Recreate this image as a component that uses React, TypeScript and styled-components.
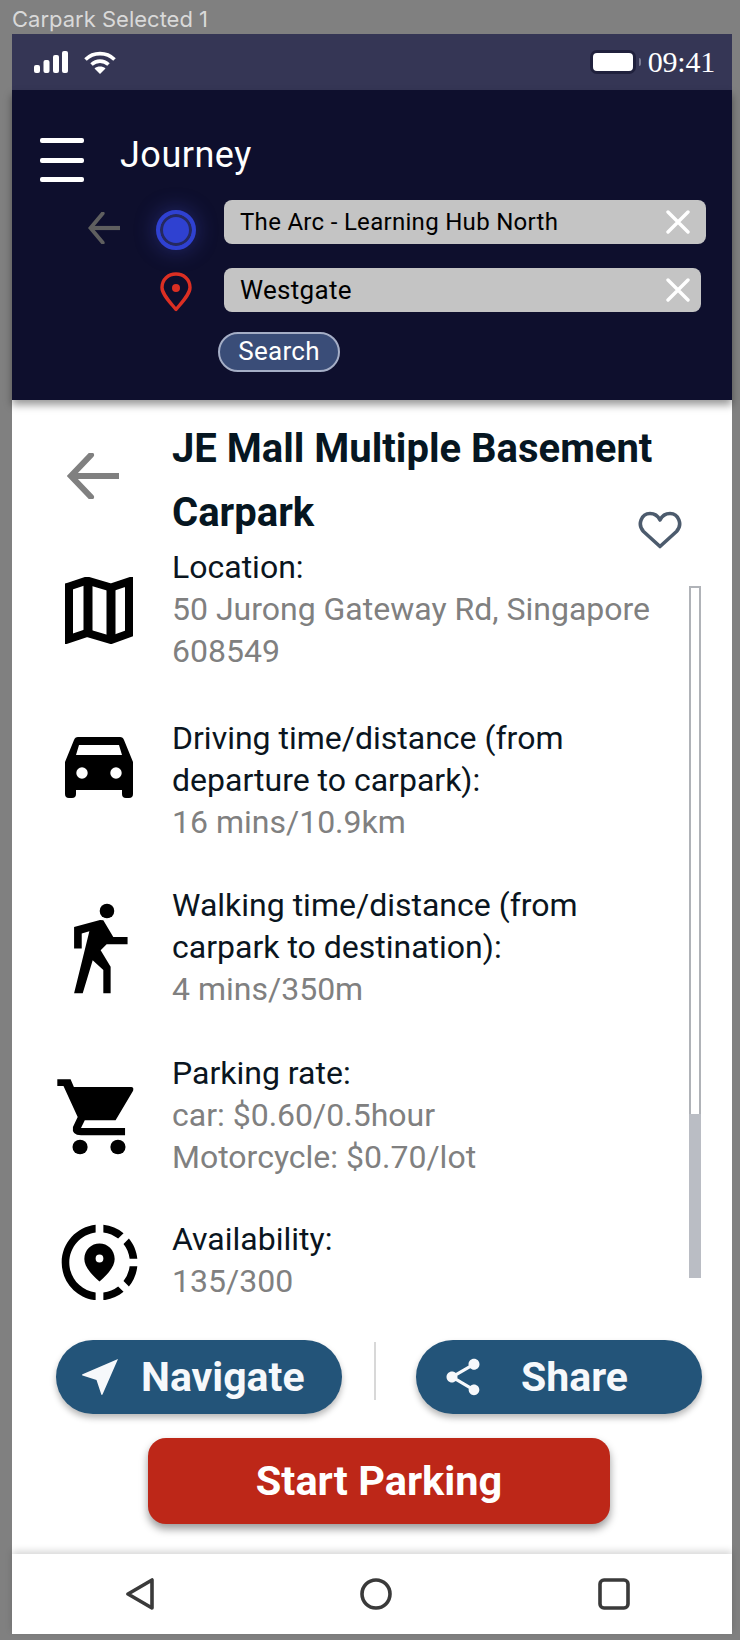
import * as React from "react";
import styled, { createGlobalStyle } from "styled-components";
import { MdOutlineShareLocation, MdShare } from "react-icons/md";

const GlobalStyle = createGlobalStyle`
  html, body {
    margin: 0;
    padding: 0;
    background: #808080;
  }
  * {
    box-sizing: border-box;
  }
`;

const Page = styled.div`
  width: 740px;
  height: 1640px;
  overflow: hidden;
  background: #808080;
  font-family: Roboto, "Liberation Sans", sans-serif;
`;

const Caption = styled.div`
  height: 34px;
  padding: 6px 0 0 12px;
  font-family: Inter, Roboto, sans-serif;
  font-size: 22px;
  line-height: 26px;
  color: #d9d9d9;
`;

const Frame = styled.div`
  width: 720px;
  height: 1600px;
  margin-left: 12px;
  background: #fff;
  display: flex;
  flex-direction: column;
`;

const StatusBar = styled.div`
  height: 56px;
  flex: none;
  background: #353655;
  display: flex;
  align-items: center;
  padding: 0 17px 0 22px;
  color: #fff;
`;

const StatusLeft = styled.div`
  display: flex;
  align-items: center;
  gap: 16px;
  flex: 1;
`;

const Battery = styled.div`
  width: 46px;
  height: 24px;
  border: 3px solid #20213d;
  border-radius: 7px;
  background: #fff;
  margin-right: 12px;
  position: relative;

  &::after {
    content: "";
    position: absolute;
    right: -8px;
    top: 5px;
    width: 2px;
    height: 8px;
    border-radius: 0 2px 2px 0;
    background: #7a7b93;
  }
`;

const Clock = styled.div`
  font-family: "Liberation Serif", serif;
  font-size: 30px;
  line-height: 32px;
  letter-spacing: -0.2px;
`;

const Header = styled.header`
  height: 310px;
  flex: none;
  background: #0e0f2d;
  padding-top: 48px;
  box-shadow: 0 5px 8px rgba(0, 0, 0, 0.4);
  position: relative;
  z-index: 2;
`;

const TitleBar = styled.div`
  height: 44px;
  display: flex;
  align-items: center;
  padding-left: 28px;
  gap: 36px;
`;

const Burger = styled.div`
  width: 44px;
  height: 44px;
  display: flex;
  flex-direction: column;
  justify-content: space-between;

  span {
    display: block;
    height: 5px;
    border-radius: 2px;
    background: #fff;
  }
`;

const HeaderTitle = styled.div`
  font-size: 36px;
  line-height: 40px;
  letter-spacing: 0.5px;
  margin-bottom: 10px;
  color: #fff;
`;

const SearchRows = styled.div`
  margin-top: 18px;
  padding-left: 76px;
  display: flex;
  flex-direction: column;
  gap: 24px;
`;

const SearchRow = styled.div`
  height: 44px;
  display: grid;
  grid-template-columns: 32px 40px auto;
  align-items: start;
`;

const BackSlot = styled.div`
  margin-top: 12px;
  width: 32px;
  height: 32px;
  color: #5f5f5f;
`;

const Marker = styled.div<{ $top: number; $left: number }>`
  margin: ${(p) => p.$top}px 0 0 ${(p) => p.$left}px;
  width: 40px;
  height: 40px;
`;

const Dot = styled.div`
  width: 40px;
  height: 40px;
  border-radius: 50%;
  background: #2f41d1;
  border: 4px solid #2f41d1;
  box-shadow: inset 0 0 0 3px #25295f, 0 0 22px rgba(70, 80, 210, 0.4);
`;

const Field = styled.div<{ $w: number; $size: number; $pad: number }>`
  width: ${(p) => p.$w}px;
  height: 44px;
  margin-left: 64px;
  padding: 0 ${(p) => p.$pad}px 0 16px;
  border-radius: 8px;
  background: #c4c4c4;
  display: flex;
  align-items: center;
  justify-content: space-between;
  font-size: ${(p) => p.$size}px;
  letter-spacing: 0.3px;
  color: #000;
`;

const SearchPill = styled.div`
  width: 122px;
  height: 40px;
  margin: 20px 0 0 206px;
  padding-bottom: 2px;
  border: 2px solid #a5aec6;
  border-radius: 20px;
  background: #3a4d78;
  display: flex;
  align-items: center;
  justify-content: center;
  font-size: 26px;
  letter-spacing: 0.3px;
  color: #fff;
`;

const Main = styled.main`
  flex: 1;
  min-height: 0;
  display: flex;
  flex-direction: column;
`;

const TitleRow = styled.div`
  flex: none;
  display: flex;
  padding: 17px 0 0 55px;
  height: 146px;
  position: relative;
`;

const BackLarge = styled.div`
  width: 52px;
  height: 46px;
  margin-top: 36px;
  color: #808080;
  flex: none;
`;

const PlaceTitle = styled.h1`
  margin: 0 0 0 53px;
  width: 500px;
  font-size: 40px;
  line-height: 64px;
  font-weight: 700;
  color: #061621;
`;

const HeartSlot = styled.div`
  position: absolute;
  left: 626px;
  top: 111px;
  width: 44px;
  height: 38px;
  color: #4c5b6d;
`;

const List = styled.div`
  position: relative;
  flex: none;
  height: 754px;
  overflow: hidden;
  padding-left: 40px;
  display: flex;
  flex-direction: column;
`;

const Row = styled.div<{ $top: number }>`
  margin-top: ${(p) => p.$top}px;
  display: grid;
  grid-template-columns: 94px 1fr;
  column-gap: 27px;
  align-items: center;
`;

const IconSlot = styled.div<{ $shift?: number }>`
  display: flex;
  justify-content: center;
  align-items: center;
  height: 84px;
  color: #000;
  transform: translateY(${(p) => p.$shift ?? 0}px);

  svg {
    flex: none;
  }
`;

const RowText = styled.div`
  font-size: 32px;
  line-height: 42px;
  width: 500px;
  margin-left: -1px;
`;

const Label = styled.div`
  color: #0a1520;
`;

const Value = styled.div`
  color: #808080;
`;

const Track = styled.div`
  position: absolute;
  left: 677px;
  top: 40px;
  width: 12px;
  height: 692px;
  border: 2px solid #b0b3b8;
  border-bottom: none;
  display: flex;
  flex-direction: column;
  justify-content: flex-end;
`;

const Thumb = styled.div`
  height: 164px;
  margin: 0 -2px;
  background: #babdc4;
`;

const Actions = styled.div`
  flex: none;
  margin-top: 40px;
  padding-left: 44px;
  display: grid;
  grid-template-columns: 286px 74px 286px;
`;

const ActionButton = styled.div<{ $gap: number; $pad: number }>`
  height: 74px;
  border-radius: 37px;
  background: #235479;
  box-shadow: 0 4px 6px rgba(0, 0, 0, 0.28);
  display: flex;
  align-items: center;
  gap: ${(p) => p.$gap}px;
  padding-left: ${(p) => p.$pad}px;
  font-size: 41px;
  font-weight: 700;
  color: #f6f8fb;
`;

const Divider = styled.div`
  width: 2px;
  height: 58px;
  margin: 2px 0 0 32px;
  background: #d8d8d8;
`;

const StartButton = styled.div`
  flex: none;
  width: 462px;
  height: 86px;
  margin: 24px 0 0 136px;
  padding-bottom: 2px;
  border-radius: 18px;
  background: #bd2718;
  box-shadow: 0 5px 8px rgba(0, 0, 0, 0.4);
  display: flex;
  align-items: center;
  justify-content: center;
  font-size: 41.5px;
  font-weight: 700;
  color: #fff;
`;

const Spacer = styled.div`
  flex: 1;
`;

const NavBar = styled.nav`
  flex: none;
  height: 80px;
  background: #fff;
  box-shadow: 0 -3px 7px rgba(0, 0, 0, 0.16);
  display: flex;
  align-items: center;
  justify-content: space-between;
  padding: 0 102px 0 114px;
  position: relative;
  color: #3a3a3a;
`;

const Signal = () => (
  <svg width="34" height="22" viewBox="0 0 34 22" fill="#fff">
    <rect x="0" y="14" width="6" height="8" rx="2" />
    <rect x="9.5" y="9" width="6" height="13" rx="2" />
    <rect x="19" y="4" width="6" height="18" rx="2" />
    <rect x="28" y="0" width="6" height="22" rx="2" />
  </svg>
);

const Wifi = () => (
  <svg width="32" height="23" viewBox="0 0 32 23" fill="none" stroke="#fff" strokeWidth="3.6">
    <path d="M1.5 8.5C9.5 .6 22.5 .6 30.5 8.5" />
    <path d="M7.5 13.5C12.5 9 19.5 9 24.5 13.5" />
    <path d="M16 23l-5.5-5.5c3-2.6 8-2.6 11 0z" fill="#fff" stroke="none" />
  </svg>
);

const Arrow = () => (
  <svg width="100%" height="100%" viewBox="0 0 52 46" fill="none" stroke="currentColor" strokeWidth="6" preserveAspectRatio="none">
    <path d="M52 23H5" />
    <path d="M24 2L4 23l20 21" strokeLinecap="round" />
  </svg>
);

const Pin = () => (
  <svg width="32" height="40" viewBox="0 0 32 40" fill="none">
    <path d="M16 37.5C9 29 2 22 2 15.5 2 7.5 8.3 2 16 2s14 5.500 14 13.500C30 22 23 29 16 37.500z" stroke="#dc2f23" strokeWidth="3.4" strokeLinejoin="round" />
    <circle cx="16" cy="16" r="4" fill="#dc2f23" />
  </svg>
);

const Cross = () => (
  <svg width="24" height="24" viewBox="0 0 24 24" stroke="#fff" strokeWidth="3.4" strokeLinecap="round">
    <path d="M2 2l20 20M22 2L2 22" />
  </svg>
);

const Heart = () => (
  <svg width="100%" height="100%" viewBox="0 0 44 38" fill="none" stroke="currentColor" strokeWidth="3.6" strokeLinejoin="round">
    <path d="M22 35.5L5.5 20.5C-1 13.5 3.5 2.5 12 2.5c4.5 0 8 2.5 10 6.5 2-4 5.500-6.500 10-6.500 8.500 0 13 11 6.500 18z" />
  </svg>
);

const MapIcon = () => (
  <svg width="68" height="67" viewBox="0 0 68 67" fill="none" stroke="#000" strokeWidth="8" strokeLinejoin="miter">
    <path d="M4 9.5L22 3.5l24 7 18-6v52L46 63l-24-7-18 6z" />
    <path d="M23 3v53M46 10v53" strokeWidth="9" />
  </svg>
);

const Car = () => (
  <svg width="68" height="61" viewBox="0 0 68 61" fill="#000" fillRule="evenodd">
    <path d="M13 0H55Q58 0 59 3L68 25V57Q68 61 64 61H61Q57 61 57 57V53H11V57Q11 61 7 61H4Q0 61 0 57V25L9 3Q10 0 13 0ZM14 8 11 18H57L54 8ZM17 30.300a5.700 5.700 0 1 0 0 11.400 5.700 5.700 0 0 0 0-11.400ZM51 30.300a5.700 5.700 0 1 0 0 11.400 5.700 5.700 0 0 0 0-11.400Z" />
  </svg>
);

const Walk = () => (
  <svg width="60" height="93" viewBox="27 30 180 280" fill="#000">
    <circle cx="141" cy="57" r="22" />
    <path d="M42 105L120 84L130 85L160 135H203V157H140L122 175L152 225V305H130V235L98 205L68 305H42L88 118L65 125V170H42Z" />
  </svg>
);

const Cart = () => (
  <svg width="90" height="80" viewBox="115 645 190 240" fill="#000" preserveAspectRatio="none">
    <path d="M122 652H150L157 675H278Q284 675 282 686L245 775H180L172 798H265V820H172Q152 820 155 795L165 765L135 672H122Z" />
    <ellipse cx="170" cy="855" rx="16" ry="22" />
    <ellipse cx="250" cy="855" rx="16" ry="22" />
  </svg>
);

const Near = () => (
  <svg width="38" height="38" viewBox="0 0 38 38" fill="#f6f8fb">
    <path d="M37 1L21.5 36.5c-.3.6-1 .6-1.200 0L15.500 22 1.500 17.500c-.6-.2-.6-.9 0-1.200z" strokeLinejoin="round" />
  </svg>
);

const rows = [
  { key: "map", top: 0, icon: <MapIcon />, shift: 1, label: ["Location:"], value: ["50 Jurong Gateway Rd, Singapore", "608549"] },
  { key: "car", top: 45, icon: <Car />, shift: -13, label: ["Driving time/distance (from", "departure to carpark):"], value: ["16 mins/10.9km"] },
  { key: "walk", top: 41, icon: <Walk />, shift: 1, label: ["Walking time/distance (from", "carpark to destination):"], value: ["4 mins/350m"] },
  { key: "cart", top: 42, icon: <Cart />, shift: 2, label: ["Parking rate:"], value: ["car: $0.60/0.5hour", "Motorcycle: $0.70/lot"] },
  { key: "avail", top: 40, icon: <MdOutlineShareLocation size={91} />, shift: 2, label: ["Availability:"], value: ["135/300"] },
];

export default function App() {
  return (
    <Page>
      <GlobalStyle />
      <Caption>Carpark Selected 1</Caption>
      <Frame>
        <StatusBar>
          <StatusLeft>
            <Signal />
            <Wifi />
          </StatusLeft>
          <Battery />
          <Clock>09:41</Clock>
        </StatusBar>
        <Header>
          <TitleBar>
            <Burger>
              <span />
              <span />
              <span />
            </Burger>
            <HeaderTitle>Journey</HeaderTitle>
          </TitleBar>
          <SearchRows>
            <SearchRow>
              <BackSlot>
                <Arrow />
              </BackSlot>
              <Marker $top={10} $left={36}>
                <Dot />
              </Marker>
              <Field $w={482} $size={24} $pad={16}>
                The Arc - Learning Hub North
                <Cross />
              </Field>
            </SearchRow>
            <SearchRow>
              <span />
              <Marker $top={4} $left={40}>
                <Pin />
              </Marker>
              <Field $w={477} $size={26} $pad={11}>
                Westgate
                <Cross />
              </Field>
            </SearchRow>
          </SearchRows>
          <SearchPill>Search</SearchPill>
        </Header>
        <Main>
          <TitleRow>
            <BackLarge>
              <Arrow />
            </BackLarge>
            <PlaceTitle>JE Mall Multiple Basement Carpark</PlaceTitle>
            <HeartSlot>
              <Heart />
            </HeartSlot>
          </TitleRow>
          <List>
            {rows.map((r) => (
              <Row key={r.key} $top={r.top}>
                <IconSlot $shift={r.shift}>{r.icon}</IconSlot>
                <RowText>
                  {r.label.map((t) => (
                    <Label key={t}>{t}</Label>
                  ))}
                  {r.value.map((t) => (
                    <Value key={t}>{t}</Value>
                  ))}
                </RowText>
              </Row>
            ))}
            <Track>
              <Thumb />
            </Track>
          </List>
          <Actions>
            <ActionButton $gap={22} $pad={25}>
              <Near />
              Navigate
            </ActionButton>
            <Divider />
            <ActionButton $gap={36} $pad={25}>
              <MdShare size={44} />
              Share
            </ActionButton>
          </Actions>
          <StartButton>Start Parking</StartButton>
          <Spacer />
        </Main>
        <NavBar>
          <svg width="28" height="32" viewBox="0 0 28 32" fill="none" stroke="currentColor" strokeWidth="3.6" strokeLinejoin="round">
            <path d="M26 2v28L2 16z" />
          </svg>
          <svg width="32" height="32" viewBox="0 0 32 32" fill="none" stroke="currentColor" strokeWidth="3.6">
            <circle cx="16" cy="16" r="14" />
          </svg>
          <svg width="32" height="32" viewBox="0 0 32 32" fill="none" stroke="currentColor" strokeWidth="3.6">
            <rect x="2" y="2" width="28" height="28" rx="4" />
          </svg>
        </NavBar>
      </Frame>
    </Page>
  );
}
